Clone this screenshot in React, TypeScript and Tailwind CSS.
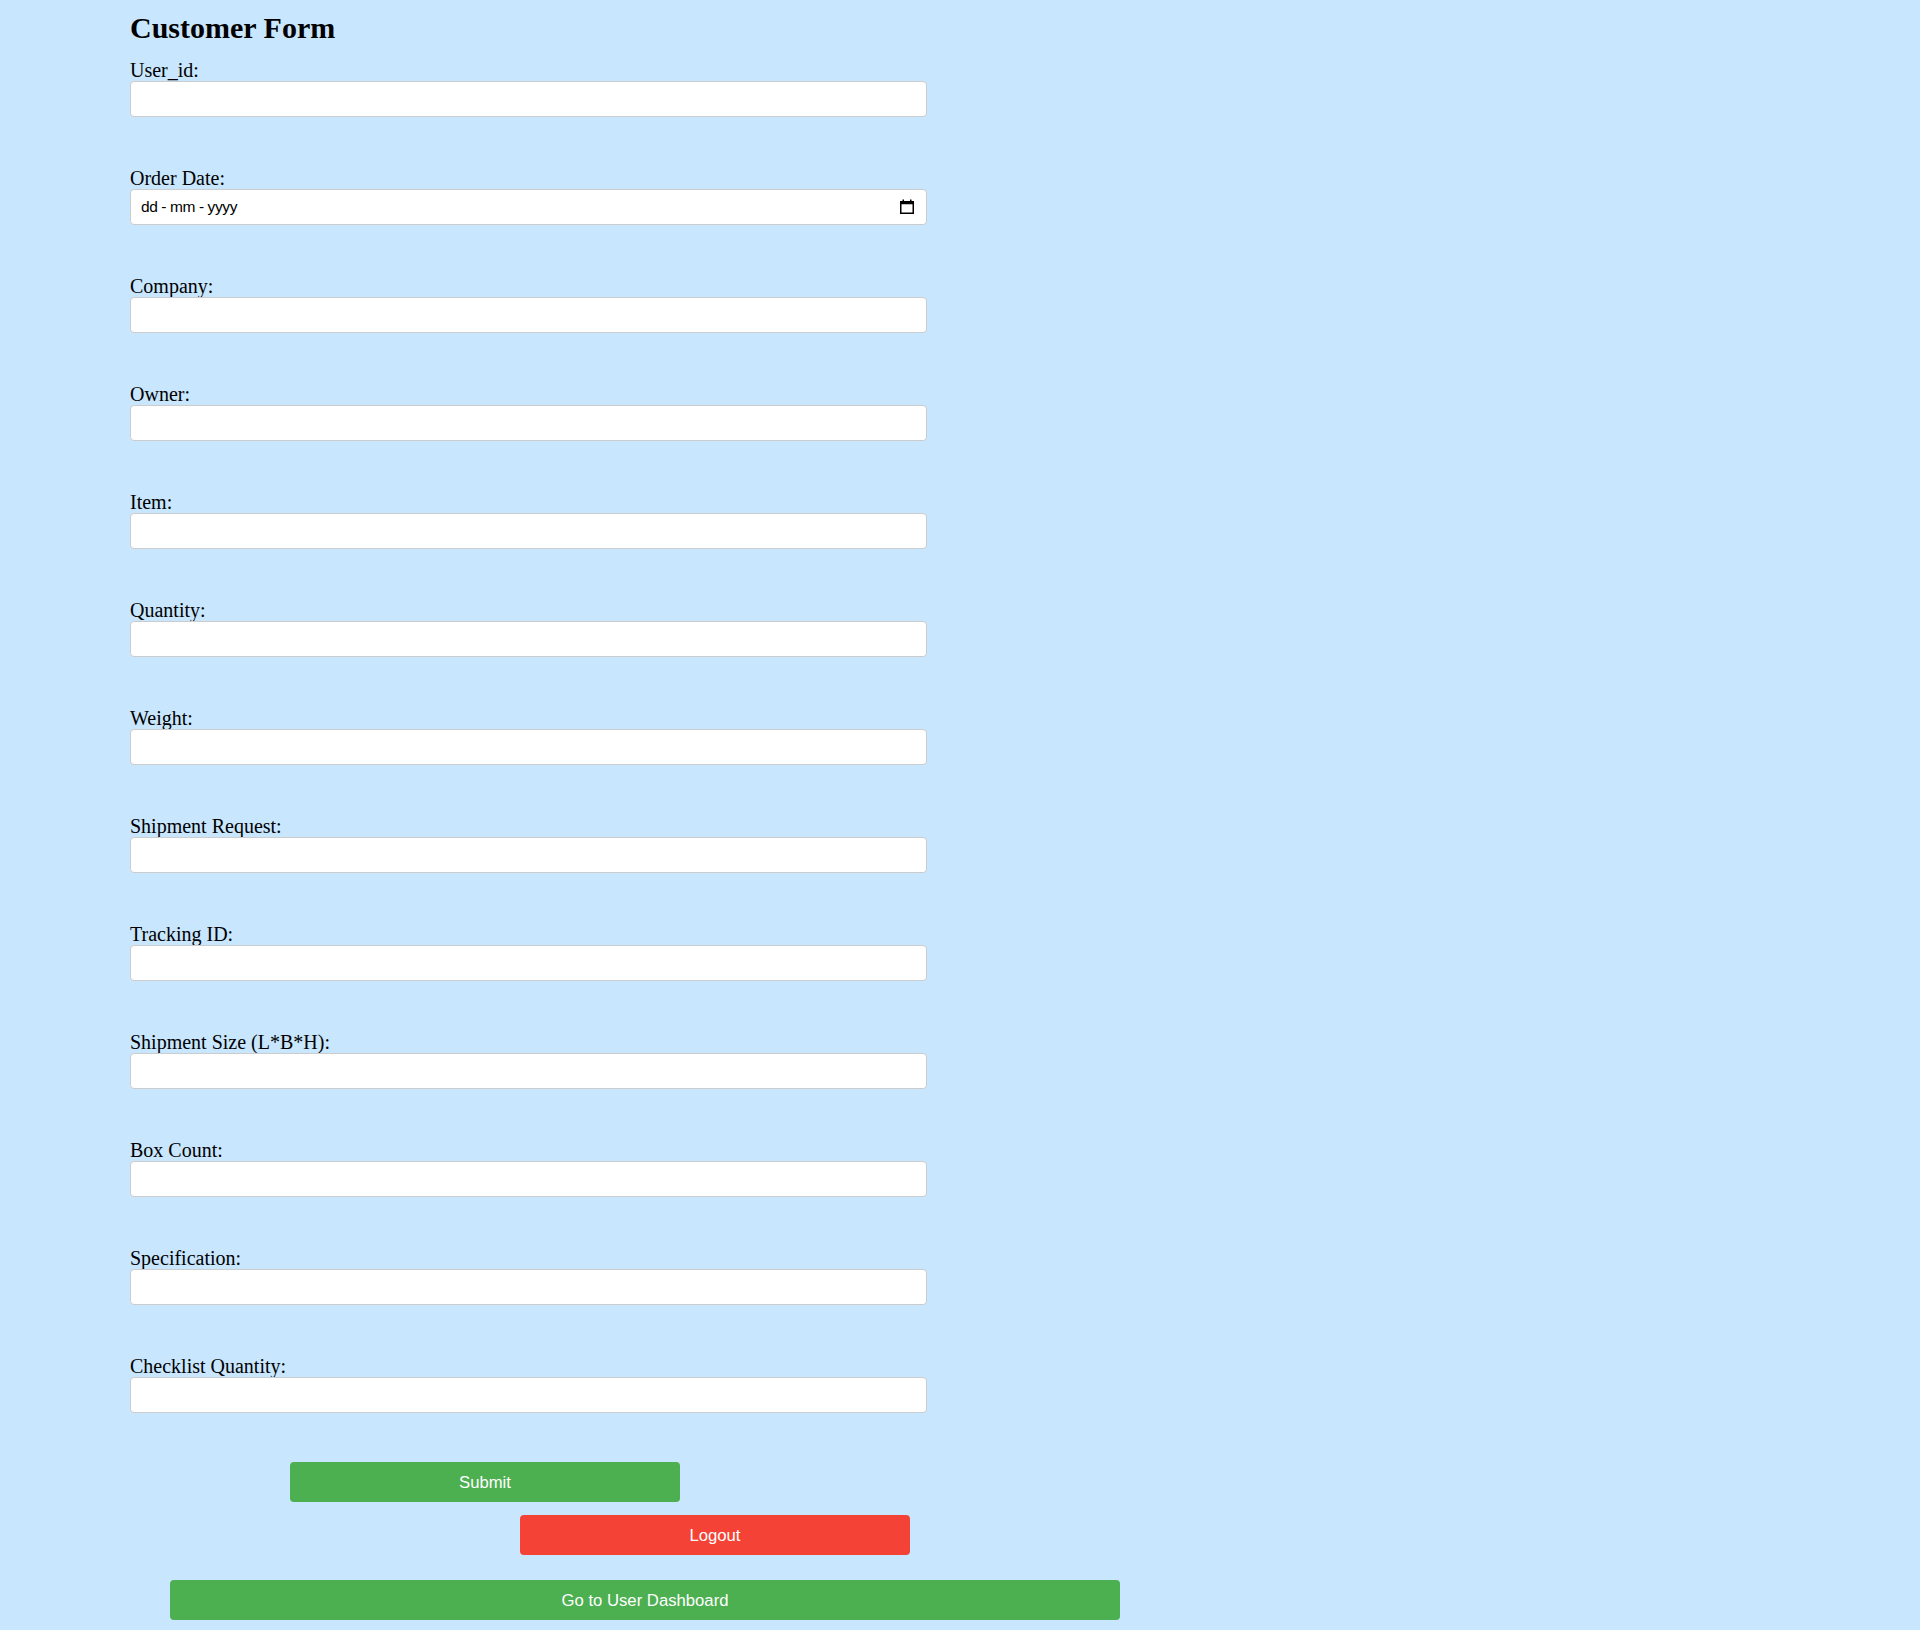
import React from "react";

const fields = [
  "User_id:",
  "Order Date:",
  "Company:",
  "Owner:",
  "Item:",
  "Quantity:",
  "Weight:",
  "Shipment Request:",
  "Tracking ID:",
  "Shipment Size (L*B*H):",
  "Box Count:",
  "Specification:",
  "Checklist Quantity:",
];

function CalendarIcon() {
  return (
    <svg width="14" height="15" viewBox="0 0 14 15" fill="none">
      <rect x="0.75" y="2.75" width="12.5" height="11.5" stroke="#000" strokeWidth="1.5" />
      <rect x="0.75" y="2.75" width="12.5" height="2.5" fill="#000" />
      <rect x="2.5" y="0.5" width="1.5" height="2.5" fill="#000" />
      <rect x="10" y="0.5" width="1.5" height="2.5" fill="#000" />
    </svg>
  );
}

export default function App() {
  return (
    <div className="min-h-[1630px] bg-[#c8e6fd] font-['Liberation_Serif',serif] text-black">
      <div className="pl-[130px] pt-[9.5px]">
        <h2 className="h-[35px] text-[30px] font-bold leading-[35px]">Customer Form</h2>
        <div className="mt-[14px] flex w-[797px] flex-col gap-[50.08px]">
          {fields.map((f) => (
            <div key={f} className="flex flex-col">
              <label className="block h-[22px] text-[20px] leading-[22px]">{f}</label>
              {f === "Order Date:" ? (
                <div className="flex h-[36px] w-full items-center justify-between rounded-[4px] border border-[#cccccc] bg-white pl-[10px] pr-[12px]">
                  <span className="font-['Liberation_Sans',sans-serif] text-[15.5px] tracking-[-0.4px] text-black">
                    dd - mm - yyyy
                  </span>
                  <CalendarIcon />
                </div>
              ) : (
                <input
                  type="text"
                  className="block h-[36px] w-full rounded-[4px] border border-[#cccccc] bg-white px-[10px] outline-none"
                />
              )}
            </div>
          ))}
        </div>
      </div>
      <div className="mt-[49px] flex flex-col font-['Liberation_Sans',sans-serif] text-[16.7px] text-white">
        <button className="ml-[290px] flex h-[40px] w-[390px] items-center justify-center rounded-[4px] bg-[#4caf50]">
          Submit
        </button>
        <button className="mt-[13px] ml-[520px] flex h-[40px] w-[390px] items-center justify-center rounded-[4px] bg-[#f44336]">
          Logout
        </button>
        <button className="mt-[25px] ml-[170px] flex h-[40px] w-[950px] items-center justify-center rounded-[4px] bg-[#4caf50]">
          Go to User Dashboard
        </button>
      </div>
    </div>
  );
}
